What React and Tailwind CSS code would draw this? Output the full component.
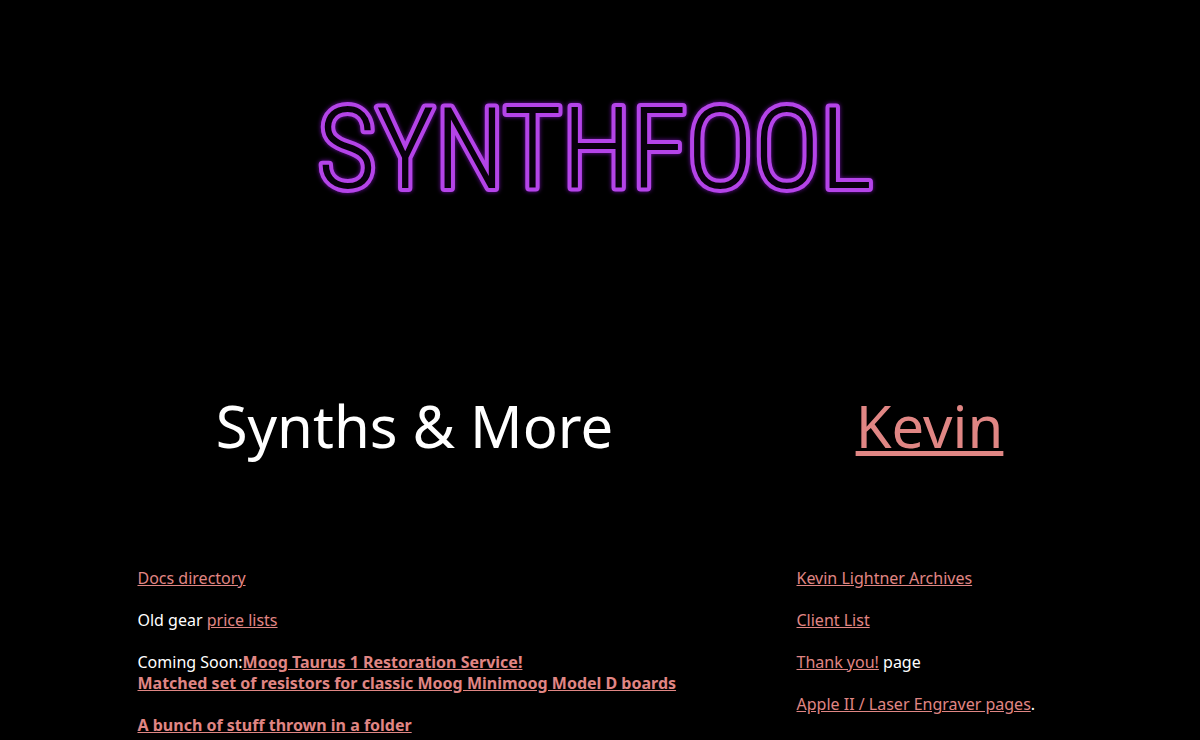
const linkClass = "text-[#e08684] underline";

function TextLink({ href, children, bold = false }) {
  return (
    <a href={href} className={bold ? `${linkClass} font-bold` : linkClass}>
      {children}
    </a>
  );
}

function Logo() {
  return (
    <svg
      viewBox="0 0 600 140"
      className="w-[600px] max-w-full overflow-visible"
      aria-label="Synthfool"
    >
      <text
        x="295"
        y="112"
        textAnchor="middle"
        fontSize="113"
        strokeWidth="8"
        strokeLinejoin="round"
        className="fill-[#08000c] stroke-[#b444e8] font-['Roboto_Condensed','DejaVu_Sans_Condensed',sans-serif] font-light [paint-order:stroke] drop-shadow-[0_0_2px_#6a10a0]"
      >
        SYNTHFOOL
      </text>
    </svg>
  );
}

export default function App() {
  return (
    <main className="h-screen overflow-y-auto bg-black font-['Noto_Sans','Open_Sans',sans-serif] text-base leading-[21px] text-white [scrollbar-width:none]">
      <h1 className="flex justify-center px-4 pt-[76px]">
        <Logo />
      </h1>

      <div className="mt-[170px] flex flex-wrap justify-center gap-x-[105px] gap-y-16 px-4">
        <section className="w-[554px] max-w-full">
          <h2 className="text-center text-[58px] leading-[80px]">Synths &amp; More</h2>
          <div className="mt-[102px] flex flex-col gap-[21px]">
            <p>
              <TextLink href="#docs">Docs directory</TextLink>
            </p>
            <p>
              Old gear <TextLink href="#prices">price lists</TextLink>
            </p>
            <p>
              Coming Soon:
              <TextLink href="#taurus" bold>Moog Taurus 1 Restoration Service!</TextLink>
              <br />
              <TextLink href="#resistors" bold>
                Matched set of resistors for classic Moog Minimoog Model D boards
              </TextLink>
            </p>
            <p>
              <TextLink href="#stuff" bold>A bunch of stuff thrown in a folder</TextLink>
            </p>
          </div>
        </section>

        <section className="w-[266px] max-w-full">
          <h2 className="text-center text-[58px] leading-[80px]">
            <TextLink href="#kevin">Kevin</TextLink>
          </h2>
          <div className="mt-[102px] flex flex-col gap-[21px]">
            <p>
              <TextLink href="#archives">Kevin Lightner Archives</TextLink>
            </p>
            <p>
              <TextLink href="#clients">Client List</TextLink>
            </p>
            <p>
              <TextLink href="#thanks">Thank you!</TextLink> page
            </p>
            <p>
              <TextLink href="#apple">Apple II / Laser Engraver pages</TextLink>.
            </p>
            <p>
              Kevin <TextLink href="#modular">the homemade modular</TextLink>
            </p>
          </div>
        </section>
      </div>
    </main>
  );
}
